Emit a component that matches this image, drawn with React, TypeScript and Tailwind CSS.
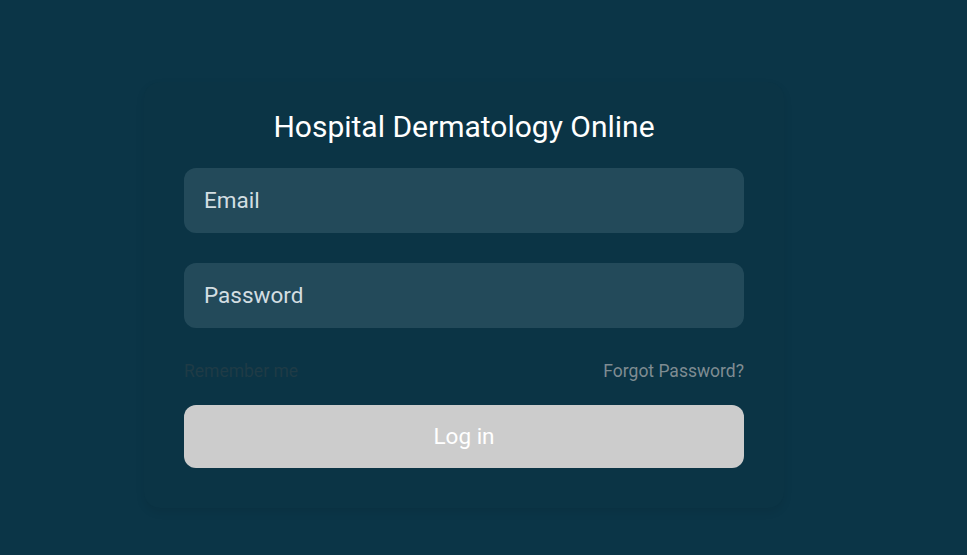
import React from "react";

export default function App() {
  return (
    <div className="min-h-[555px] w-full bg-[#0b3547] font-['Roboto',sans-serif] pt-[82px] pl-[144px]">
      <div className="w-[640px] rounded-[16px] bg-[#0b3445] shadow-[0_4px_10px_rgba(0,0,0,0.08)] px-[40px] pt-[26px] pb-[40px] flex flex-col">
        <h1 className="text-center text-white text-[30px] leading-[38px] font-normal">
          Hospital Dermatology Online
        </h1>
        <div className="mt-[22px] h-[65px] rounded-[12px] bg-[#234a5a] flex items-center px-[20px] text-[22.5px] text-[#d3dee2]">
          Email
        </div>
        <div className="mt-[30px] h-[65px] rounded-[12px] bg-[#234a5a] flex items-center px-[20px] text-[22.5px] text-[#d3dee2]">
          Password
        </div>
        <div className="mt-[31px] h-[24px] flex items-center justify-between text-[17.5px]">
          <span className="text-[#1f3b46]">Remember me</span>
          <span className="text-[#7f8c92]">Forgot Password?</span>
        </div>
        <button className="mt-[22px] h-[63px] rounded-[12px] bg-[#cccccc] text-white text-[22.5px] flex items-center justify-center">
          Log in
        </button>
      </div>
    </div>
  );
}
